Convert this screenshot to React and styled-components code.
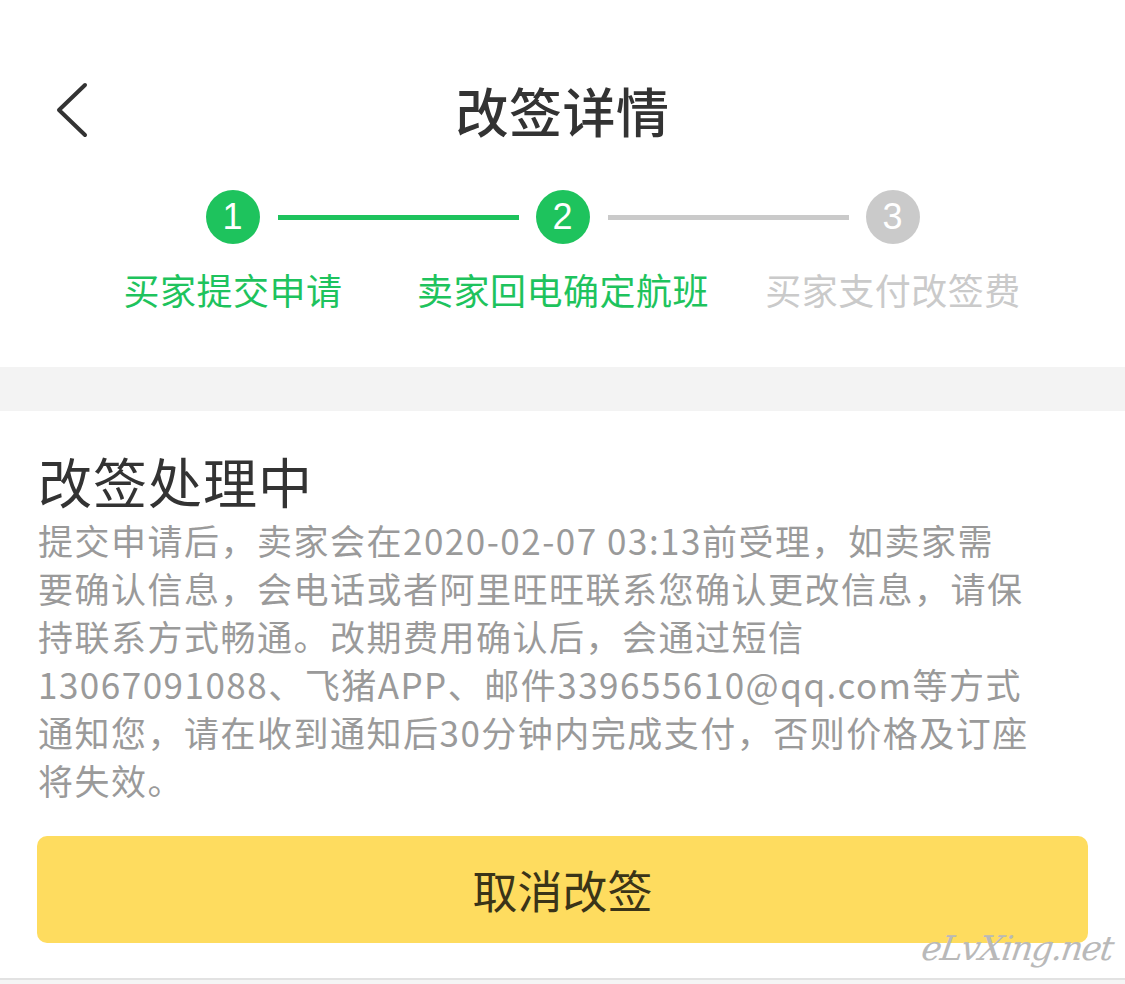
import React from "react";
import styled, { createGlobalStyle } from "styled-components";

const GlobalStyle = createGlobalStyle`
    html, body{
        margin: 0;
        padding: 0;
        background: #ffffff;
    }
    body{
        font-family: "Noto Sans CJK SC", "Noto Sans", sans-serif;
        color: #333333;
    }
`;

const GREEN = "#1ec35d";
const GRAY = "#cacaca";

const steps = [
    { num: 1, label: "买家提交申请", done: true },
    { num: 2, label: "卖家回电确定航班", done: true },
    { num: 3, label: "买家支付改签费", done: false }
];

const notice = [
    "提交申请后，卖家会在2020-02-07 03:13前受理，如卖家需",
    "要确认信息，会电话或者阿里旺旺联系您确认更改信息，请保",
    "持联系方式畅通。改期费用确认后，会通过短信",
    "13067091088、飞猪APP、邮件339655610@qq.com等方式",
    "通知您，请在收到通知后30分钟内完成支付，否则价格及订座",
    "将失效。"
];

const App = () => {
    return (
        <Page>
            <GlobalStyle />
            <NavBar>
                <BackButton type="button" aria-label="返回">
                    <svg width="34" height="56" viewBox="0 0 34 56">
                        <polyline
                            points="30,3 4,28 30,53"
                            fill="none"
                            stroke="#333"
                            strokeWidth="4"
                            strokeLinecap="round"
                            strokeLinejoin="round"
                        />
                    </svg>
                </BackButton>
                <Title>改签详情</Title>
            </NavBar>

            <Steps>
                {steps.map((step, i) => {
                    const prev = steps[i - 1];
                    const next = steps[i + 1];
                    return (
                        <Step key={step.num}>
                            <Track>
                                <Connector $side="left" $hidden={!prev} $active={step.done} />
                                <Dot $active={step.done}>{step.num}</Dot>
                                <Connector $side="right" $hidden={!next} $active={next && next.done} />
                            </Track>
                            <StepLabel $active={step.done}>{step.label}</StepLabel>
                        </Step>
                    );
                })}
            </Steps>

            <Divider />

            <Card>
                <Heading>改签处理中</Heading>
                <Notice>
                    {notice.map((line) => (
                        <NoticeLine key={line}>{line}</NoticeLine>
                    ))}
                </Notice>
                <CancelButton type="button">取消改签</CancelButton>
                <Watermark>eLvXing.net</Watermark>
            </Card>
            <Footer />
        </Page>
    );
};

export default App;

const Page = styled.div`
    width: 1125px;
    height: 984px;
    overflow: hidden;
    background: #ffffff;
`;

const NavBar = styled.div`
    position: relative;
    height: 100px;
    padding-top: 60px;
    display: flex;
    align-items: center;
    justify-content: center;
`;

const BackButton = styled.button`
    position: absolute;
    left: 55px;
    top: 82px;
    padding: 0;
    border: 0;
    background: transparent;
    display: flex;
    cursor: pointer;
`;

const Title = styled.h1`
    margin: 0;
    font-size: 53px;
    font-weight: 500;
    line-height: 60px;
    color: #333333;
    letter-spacing: 0.5px;
`;

const Steps = styled.div`
    height: 177px;
    padding-top: 30px;
    display: flex;
    justify-content: center;
    padding-left: 1px;
`;

const Step = styled.div`
    width: 330px;
    display: flex;
    flex-direction: column;
    align-items: center;
`;

const Track = styled.div`
    width: 100%;
    height: 54px;
    display: flex;
    align-items: center;
`;

const Connector = styled.div`
    flex: 1;
    height: 5px;
    background: ${({ $active }) => ($active ? GREEN : GRAY)};
    visibility: ${({ $hidden }) => ($hidden ? "hidden" : "visible")};
    margin: ${({ $side }) => ($side === "left" ? "0 17px 0 0" : "0 0 0 18px")};
`;

const Dot = styled.div`
    width: 54px;
    height: 54px;
    border-radius: 50%;
    background: ${({ $active }) => ($active ? GREEN : GRAY)};
    color: #ffffff;
    font-family: "Liberation Sans", "Noto Sans", sans-serif;
    font-size: 36px;
    line-height: 54px;
    text-align: center;
    flex-shrink: 0;
`;

const StepLabel = styled.div`
    margin-top: 22px;
    font-size: 36px;
    line-height: 46px;
    letter-spacing: 0.5px;
    color: ${({ $active }) => ($active ? GREEN : GRAY)};
    white-space: nowrap;
`;

const Divider = styled.div`
    height: 44px;
    background: #f3f3f3;
`;

const Card = styled.div`
    position: relative;
    padding: 40px 37px 0 37px;
    height: 567px;
    box-sizing: border-box;
`;

const Heading = styled.h2`
    margin: 0 0 0 1px;
    font-size: 54px;
    font-weight: 400;
    line-height: 60px;
    letter-spacing: 1px;
    color: #333333;
`;

const Notice = styled.div`
    margin: 5px 0 0 1px;
    font-size: 35px;
    line-height: 48px;
    letter-spacing: 1.5px;
    color: #9a9a9a;
`;

const NoticeLine = styled.div`
    white-space: nowrap;
`;

const CancelButton = styled.button`
    display: block;
    margin-top: 32px;
    width: 100%;
    height: 107px;
    border: 0;
    border-radius: 10px;
    background: #fedc5f;
    color: #3a3418;
    font-family: "Noto Sans CJK SC", sans-serif;
    font-size: 45px;
    cursor: pointer;
`;

const Watermark = styled.div`
    position: absolute;
    right: 12px;
    bottom: 10px;
    font-family: "DejaVu Serif", serif;
    font-style: italic;
    font-size: 34px;
    color: #b9b9b9;
    letter-spacing: -1.5px;
    transform: skewX(-8deg);
`;

const Footer = styled.div`
    height: 6px;
    border-top: 2px solid #e2e2e2;
    background: #f5f5f5;
`;
